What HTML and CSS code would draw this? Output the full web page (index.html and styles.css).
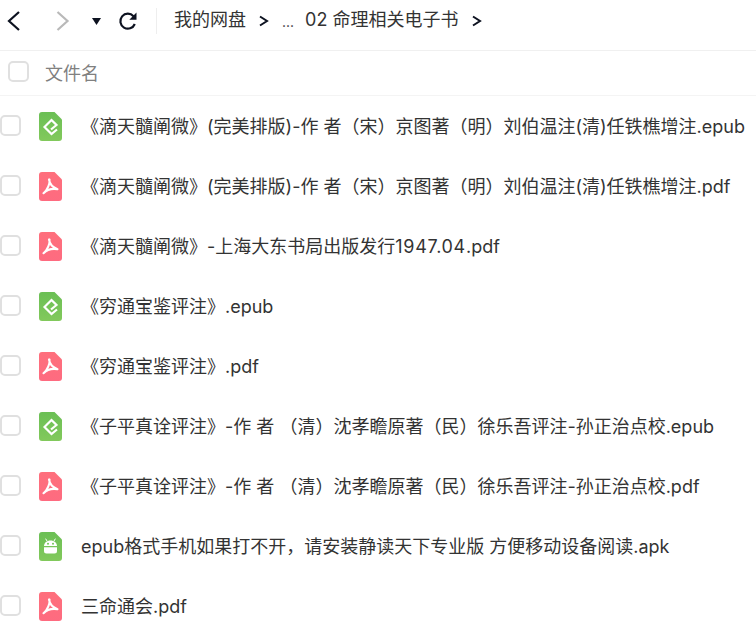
FILE: index.html
```html
<!DOCTYPE html>
<html lang="zh">
<head>
<meta charset="utf-8">
<title>02 命理相关电子书</title>
<link rel="stylesheet" href="styles.css">
</head>
<body>
<svg class="defs" width="0" height="0" aria-hidden="true">
  <defs>
    <linearGradient id="redfill" x1="0" y1="0" x2="0" y2="1"><stop offset="0" stop-color="#fe6f7c"/><stop offset="1" stop-color="#fe6b80"/></linearGradient>
    <linearGradient id="greenfill" x1="0" y1="0" x2="0" y2="1"><stop offset="0" stop-color="#6bbf55"/><stop offset="1" stop-color="#82c95c"/></linearGradient>
    <symbol id="pdf" viewBox="0 0 23 29">
      <path d="M3 0H15.500L23 7.500V26a3 3 0 0 1-3 3H3a3 3 0 0 1-3-3V3a3 3 0 0 1 3-3z" fill="url(#redfill)"/>
      <path d="M10 7.500c.5 3.500 2.500 7.500 8.500 9.700M10.500 7.500c.5 4-1.500 10-6 13.700M4.500 21.200c3.500-3.600 8-5 14-4" fill="none" stroke="#fff" stroke-width="2.100" stroke-linecap="round"/>
    </symbol>
    <symbol id="epub" viewBox="0 0 23 29">
      <path d="M3 0H15.500L23 7.500V26a3 3 0 0 1-3 3H3a3 3 0 0 1-3-3V3a3 3 0 0 1 3-3z" fill="url(#greenfill)"/>
      <path d="M18 17.500L12.500 22l-7-7 7-7 5 5-5.500 4.500" fill="none" stroke="#fff" stroke-width="2.200" stroke-linejoin="miter" stroke-linecap="butt"/>
    </symbol>
    <symbol id="apk" viewBox="0 0 23 29">
      <path d="M3 0H15.500L23 7.500V26a3 3 0 0 1-3 3H3a3 3 0 0 1-3-3V3a3 3 0 0 1 3-3z" fill="url(#greenfill)"/>
      <path d="M5 14c.2-3.200 2.800-5.500 6.500-5.500s6.300 2.300 6.500 5.500z" fill="#fff"/>
      <path d="M8 9L6.800 7M15 9l1.200-2" stroke="#fff" stroke-width="1" stroke-linecap="round"/>
      <path d="M5 15.200h13v3.800a2.500 2.500 0 0 1-2.500 2.500h-8a2.500 2.500 0 0 1-2.500-2.500z" fill="#fff"/>
      <circle cx="9" cy="11.700" r="1" fill="#73c558"/>
      <circle cx="14" cy="11.700" r="1" fill="#73c558"/>
    </symbol>
  </defs>
</svg>
<header class="toolbar">
  <button class="tool back" aria-label="后退"><svg width="16" height="22" viewBox="0 0 16 22"><path d="M14 2L4 11l10 9" fill="none" stroke="#0d1220" stroke-width="2.200"/></svg></button>
  <button class="tool forward" aria-label="前进"><svg width="16" height="22" viewBox="0 0 16 22"><path d="M2.500 2l10 9-10 9" fill="none" stroke="#b9b9b9" stroke-width="2.200"/></svg></button>
  <button class="tool caret" aria-label="历史"><svg width="9" height="7" viewBox="0 0 9 7"><path d="M0 0h9L4.500 7z" fill="#0d1220"/></svg></button>
  <button class="tool refresh" aria-label="刷新"><svg width="20" height="20" viewBox="0 0 20 20"><path d="M15.500 5.200A7.500 7.500 0 1 0 16.800 13" fill="none" stroke="#0d1220" stroke-width="2.200"/><path d="M18.500 1.500v7.200h-7.200z" fill="#0d1220"/></svg></button>
  <span class="divider"></span>
  <nav class="crumbs">
    <span class="crumb">我的网盘</span>
    <svg class="sep" width="10" height="12" viewBox="0 0 10 12"><path d="M1 1.500l7 4.500-7 4.500" fill="none" stroke="#0d1220" stroke-width="2"/></svg>
    <span class="crumb dots">...</span>
    <span class="crumb">02 命理相关电子书</span>
    <svg class="sep" width="10" height="12" viewBox="0 0 10 12"><path d="M1 1.500l7 4.500-7 4.500" fill="none" stroke="#0d1220" stroke-width="2"/></svg>
  </nav>
</header>
<div class="list-head">
  <span class="check head-check"></span>
  <span class="head-name">文件名</span>
</div>
<ul class="files">
  <li class="file"><span class="check"></span><svg class="icon"><use href="#epub"/></svg><span class="name">《滴天髓阐微》(完美排版)-作 者（宋）京图著（明）刘伯温注(清)任铁樵增注.epub</span></li>
  <li class="file"><span class="check"></span><svg class="icon"><use href="#pdf"/></svg><span class="name">《滴天髓阐微》(完美排版)-作 者（宋）京图著（明）刘伯温注(清)任铁樵增注.pdf</span></li>
  <li class="file"><span class="check"></span><svg class="icon"><use href="#pdf"/></svg><span class="name">《滴天髓阐微》-上海大东书局出版发行<span class="num">1947.04</span>.pdf</span></li>
  <li class="file"><span class="check"></span><svg class="icon"><use href="#epub"/></svg><span class="name">《穷通宝鉴评注》.epub</span></li>
  <li class="file"><span class="check"></span><svg class="icon"><use href="#pdf"/></svg><span class="name">《穷通宝鉴评注》.pdf</span></li>
  <li class="file"><span class="check"></span><svg class="icon"><use href="#epub"/></svg><span class="name">《子平真诠评注》-作 者 （清）沈孝瞻原著（民）徐乐吾评注-孙正治点校.epub</span></li>
  <li class="file"><span class="check"></span><svg class="icon"><use href="#pdf"/></svg><span class="name">《子平真诠评注》-作 者 （清）沈孝瞻原著（民）徐乐吾评注-孙正治点校.pdf</span></li>
  <li class="file"><span class="check"></span><svg class="icon"><use href="#apk"/></svg><span class="name">epub格式手机如果打不开，请安装静读天下专业版 方便移动设备阅读.apk</span></li>
  <li class="file"><span class="check"></span><svg class="icon"><use href="#pdf"/></svg><span class="name">三命通会.pdf</span></li>
</ul>
</body>
</html>
```
FILE: styles.css
```css
* { box-sizing: border-box; }
html, body { margin: 0; padding: 0; background: #fff; overflow: hidden; }
body {
  width: 756px;
  height: 641px;
  font-family: Inter, "Noto Sans CJK SC", sans-serif;
  color: #333;
}
.defs { position: absolute; }
.toolbar {
  display: flex;
  align-items: center;
  height: 51px;
  padding: 0 0 8px 5px;
  border-bottom: 1px solid #f0f0f0;
}
.tool {
  display: flex;
  align-items: center;
  justify-content: center;
  padding: 0;
  border: 0;
  background: none;
}
.forward { margin-left: 34px; }
.caret { margin-left: 21px; }
.refresh { margin-left: 17px; }
.divider {
  width: 1px;
  height: 26px;
  margin-left: 18px;
  background: #eee;
}
.crumbs {
  display: flex;
  align-items: center;
  margin-left: 17px;
  margin-top: -7px;
  font-size: 18px;
  color: #333;
}
.sep { margin-left: 13px; margin-top: 7px; }
.dots { margin-left: 13px; font-size: 14px; margin-top: 7px; }
.dots + .crumb { margin-left: 11px; }
.list-head {
  display: flex;
  align-items: center;
  height: 45px;
  border-bottom: 1px solid #f4f4f4;
  padding-left: 8px;
  padding-bottom: 2px;
}
.head-check { width: 20px; height: 20px; margin-bottom: 0; }
.head-name { margin-left: 16px; font-size: 18px; color: #808080; }
.files { list-style: none; margin: 0; padding: 0; }
.file {
  display: flex;
  align-items: center;
  height: 60px;
}
.check {
  display: block;
  flex: none;
  width: 21px;
  height: 21px;
  margin-bottom: 1px;
  border: 2px solid #e0e0e0;
  border-radius: 5px;
  background: #fff;
}
.icon { flex: none; width: 23px; height: 29px; margin-left: 18px; margin-top: 1px; }
.name { margin-left: 19px; margin-top: 2px; font-size: 18px; line-height: 24px; white-space: nowrap; color: #333; }
.num { letter-spacing: .7px; }
```
